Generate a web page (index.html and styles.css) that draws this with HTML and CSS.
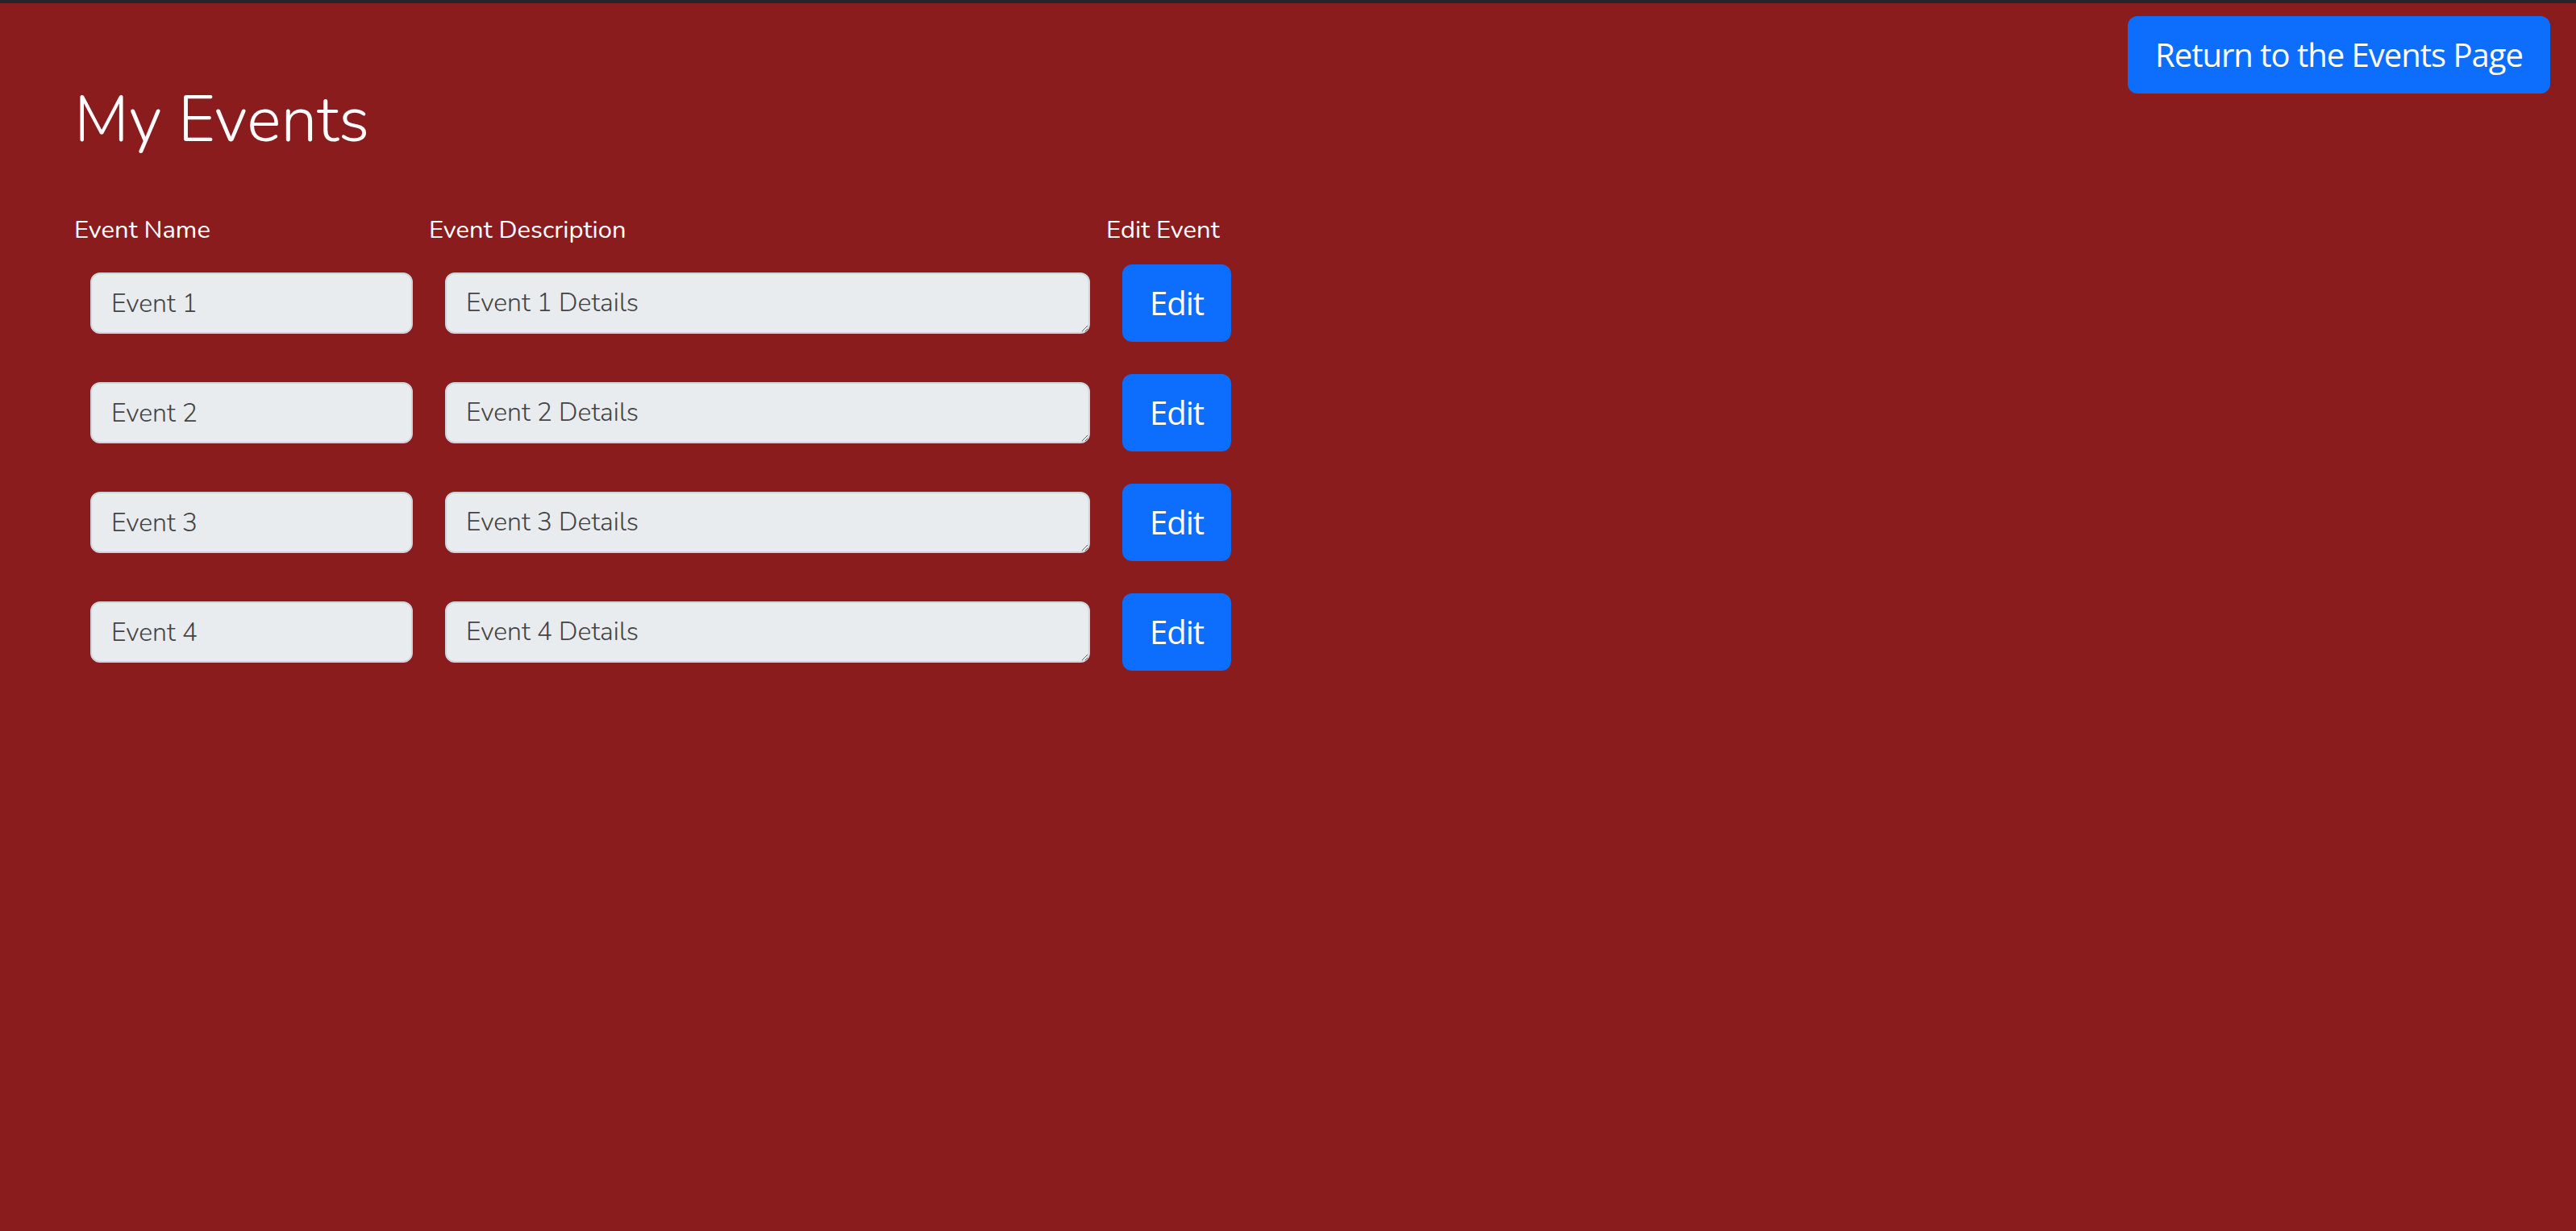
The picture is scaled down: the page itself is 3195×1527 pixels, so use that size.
FILE: index.html
```html
<!DOCTYPE html>
<html lang="en">
<head>
<meta charset="utf-8">
<title>My Events</title>
<link rel="stylesheet" href="styles.css">
</head>
<body>
<div class="page">
  <header class="top">
    <h1 class="title">My Events</h1>
    <button class="btn btn-lg" type="button">Return to the Events Page</button>
  </header>
  <div class="events">
    <div class="head">Event Name</div>
    <div class="head">Event Description</div>
    <div class="head">Edit Event</div>

    <div class="cell"><input class="field" type="text" value="Event 1" readonly></div>
    <div class="cell"><textarea class="field area" rows="1" readonly>Event 1 Details</textarea></div>
    <div class="cell"><button class="btn" type="button">Edit</button></div>

    <div class="cell"><input class="field" type="text" value="Event 2" readonly></div>
    <div class="cell"><textarea class="field area" rows="1" readonly>Event 2 Details</textarea></div>
    <div class="cell"><button class="btn" type="button">Edit</button></div>

    <div class="cell"><input class="field" type="text" value="Event 3" readonly></div>
    <div class="cell"><textarea class="field area" rows="1" readonly>Event 3 Details</textarea></div>
    <div class="cell"><button class="btn" type="button">Edit</button></div>

    <div class="cell"><input class="field" type="text" value="Event 4" readonly></div>
    <div class="cell"><textarea class="field area" rows="1" readonly>Event 4 Details</textarea></div>
    <div class="cell"><button class="btn" type="button">Edit</button></div>
  </div>
</div>
</body>
</html>
```
FILE: styles.css
```css
* { box-sizing: border-box; }
html, body { height: 100%; }
body {
  margin: 0;
  background: #8a1c1e;
  border-top: 4px solid #262626;
  font-family: Nunito, Lato, "Open Sans", sans-serif;
  font-size: 32px;
  color: #fff;
}
.page {
  padding: 0 32px 0 92px;
}
.top {
  display: flex;
  justify-content: space-between;
  align-items: flex-start;
}
.title {
  margin: 0;
  padding-top: 97px;
  font-size: 80px;
  font-weight: 300;
  line-height: 96px;
}
.btn {
  font-family: "Open Sans", "Noto Sans", sans-serif;
  font-size: 40px;
  letter-spacing: -1px;
  line-height: 60px;
  color: #fff;
  background: #0d6efd;
  border: 2px solid #0d6efd;
  border-radius: 12px;
  padding: 16px 32px;
  cursor: pointer;
}
.btn-lg {
  margin-top: 16px;
}
.events {
  display: grid;
  grid-template-columns: 440px 840px max-content;
  margin-top: 65px;
}
.head {
  font-size: 31px;
  line-height: 46px;
}
.cell {
  padding: 20px;
  display: flex;
  align-items: center;
}
.field {
  display: block;
  width: 400px;
  height: 76px;
  margin: 0;
  padding: 12px 24px;
  font-family: Nunito, Lato, "Open Sans", sans-serif;
  font-size: 32px;
  font-weight: 300;
  line-height: 48px;
  color: #444;
  background: #e9ecef;
  border: 2px solid #ced4da;
  border-radius: 12px;
  outline: none;
}
.area {
  width: 800px;
  resize: vertical;
  overflow: hidden;
}
```
